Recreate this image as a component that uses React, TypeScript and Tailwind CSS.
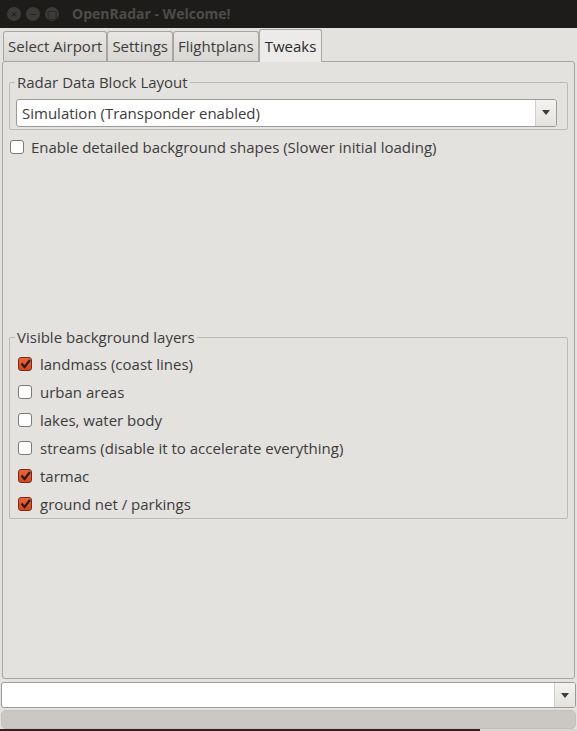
import React, { useState } from 'react';

type Layer = { id: string; label: string; on: boolean };

const initialLayers: Layer[] = [
  { id: 'landmass', label: 'landmass (coast lines)', on: true },
  { id: 'urban', label: 'urban areas', on: false },
  { id: 'lakes', label: 'lakes, water body', on: false },
  { id: 'streams', label: 'streams (disable it to accelerate everything)', on: false },
  { id: 'tarmac', label: 'tarmac', on: true },
  { id: 'groundnet', label: 'ground net / parkings', on: true },
];

const tabs = ['Select Airport', 'Settings', 'Flightplans', 'Tweaks'];

const Check: React.FC<{ checked: boolean }> = ({ checked }) =>
  checked ? (
    <span className="flex h-[14px] w-[14px] items-center justify-center rounded-[3px] border border-[#7a2a14] bg-gradient-to-b from-[#f0643a] to-[#d2461f]">
      <svg width="11" height="10" viewBox="0 0 11 10">
        <path d="M1.5 4.5 L4.5 8 L10 1" fill="none" stroke="#2b1a14" strokeWidth="2.2" />
      </svg>
    </span>
  ) : (
    <span className="h-[14px] w-[14px] rounded-[3px] border border-[#7c7a76] bg-white" />
  );

const ComboArrow: React.FC = () => (
  <span className="flex w-[21px] items-center justify-center border-l border-[#cfcdc9] bg-gradient-to-b from-[#f4f3f1] to-[#e4e2df]">
    <svg width="8" height="5" viewBox="0 0 8 5">
      <path d="M0 0 H8 L4 5 Z" fill="#3c3c3c" />
    </svg>
  </span>
);

const GroupBox: React.FC<{ title: string; className?: string; children: React.ReactNode }> = ({ title, className, children }) => (
  <div className={`relative mx-[6px] rounded-[2px] border border-[#bcbab6] ${className ?? ''}`}>
    <span className="absolute -top-[11px] left-[5px] bg-[#e3e2df] px-[2px] leading-[20px]">{title}</span>
    {children}
  </div>
);

export default function App() {
  const [tab, setTab] = useState(3);
  const [detailed, setDetailed] = useState(false);
  const [layers, setLayers] = useState(initialLayers);

  return (
    <div
      className="flex h-[731px] w-[577px] flex-col overflow-hidden bg-[#e3e2df] text-[15px] text-[#3c3c3c]"
      style={{ fontFamily: '"Open Sans", "DejaVu Sans", sans-serif' }}
    >
      {/* title bar */}
      <div className="flex h-[28px] items-center bg-[#1d1c1a] pl-[7px]">
        <div className="flex gap-[5px]">
          {['×', '−', '□'].map((g) => (
            <span key={g} className="flex h-[14px] w-[14px] items-center justify-center rounded-full bg-[#3b3a37] text-[11px] leading-none text-[#1d1c1a]">
              {g}
            </span>
          ))}
        </div>
        <span className="ml-[13px] text-[14px] font-bold text-[#4d4c48]">OpenRadar - Welcome!</span>
      </div>

      {/* tabs */}
      <div className="flex h-[33px] items-end pl-[3px]">
        {tabs.map((t, i) => (
          <button
            key={t}
            onClick={() => setTab(i)}
            className={
              i === tab
                ? 'relative z-10 -mb-px flex h-[33px] items-center rounded-t-[3px] border border-b-0 border-[#a8a6a2] bg-[#ecebe9] px-[5px] text-[15px] text-[#2a2a2a]'
                : 'flex h-[30px] items-center rounded-t-[3px] border border-b-0 border-[#a8a6a2] bg-gradient-to-b from-[#e8e7e4] to-[#d9d7d3] px-[4px] text-[15px]'
            }
          >
            {t}
          </button>
        ))}
      </div>

      {/* tab page */}
      <div className="mx-[2px] flex h-[619px] flex-col rounded-[3px] border border-[#a8a6a2] pt-[20px]">
        <GroupBox title="Radar Data Block Layout" className="pb-[2px] pt-[16px]">
          <div className="ml-[6px] mr-[10px] flex h-[28px] overflow-hidden rounded-[3px] border border-[#9d9b97] bg-white">
            <span className="flex-1 pl-[5px] leading-[26px]">Simulation (Transponder enabled)</span>
            <ComboArrow />
          </div>
        </GroupBox>

        <label className="mt-[6px] flex h-[22px] items-center gap-[7px] pl-[7px]" onClick={() => setDetailed(!detailed)}>
          <Check checked={detailed} />
          <span>Enable detailed background shapes (Slower initial loading)</span>
        </label>

        <GroupBox title="Visible background layers" className="mt-[179px] pt-[12px]">
          <div className="flex flex-col">
            {layers.map((l, i) => (
              <label
                key={l.id}
                className="flex h-[28px] items-center gap-[8px] pl-[8px]"
                onClick={() => setLayers(layers.map((x, j) => (j === i ? { ...x, on: !x.on } : x)))}
              >
                <Check checked={l.on} />
                <span>{l.label}</span>
              </label>
            ))}
          </div>
        </GroupBox>
      </div>

      {/* bottom combo + progress */}
      <div className="mx-px mt-[3px] flex h-[26px] overflow-hidden rounded-[3px] border border-[#9d9b97] bg-white">
        <span className="flex-1" />
        <ComboArrow />
      </div>
      <div className="mx-px mt-[2px] h-[19px] rounded-[5px] border border-[#c2bfba] bg-[#cbc8c3]" />
      <div className="mt-auto flex h-[2px]">
        <span className="w-[480px] bg-[#3a1c1c]" />
        <span className="flex-1 bg-[#d8d6d2]" />
      </div>
    </div>
  );
}
